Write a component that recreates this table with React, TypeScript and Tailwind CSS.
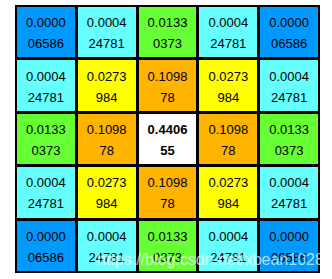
const BLUE = "bg-[#0099ff]";
const CYAN = "bg-[#66ffff]";
const GREEN = "bg-[#66ff33]";
const YELLOW = "bg-[#ffff00]";
const ORANGE = "bg-[#ffb400]";
const WHITE = "bg-white";

type Cell = { a: string; b: string; bg: string; bold?: boolean };

const far: Cell = { a: "0.0000", b: "06586", bg: BLUE };
const edge: Cell = { a: "0.0004", b: "24781", bg: CYAN };
const axis: Cell = { a: "0.0133", b: "0373", bg: GREEN };
const diag: Cell = { a: "0.0273", b: "984", bg: YELLOW };
const near: Cell = { a: "0.1098", b: "78", bg: ORANGE };
const mid: Cell = { a: "0.4406", b: "55", bg: WHITE, bold: true };

const ROWS: Cell[][] = [
  [far, edge, axis, edge, far],
  [edge, diag, near, diag, edge],
  [axis, near, mid, near, axis],
  [edge, diag, near, diag, edge],
  [far, edge, axis, edge, far],
];

export default function App() {
  return (
    <div className="relative h-[279px] w-[332px] bg-white font-['Liberation_Sans',Arial,sans-serif]">
      <div className="absolute left-[15px] top-[5px] grid h-[268px] w-[305px] grid-cols-5 grid-rows-5 gap-[3px] bg-black p-[2px]">
        {ROWS.flat().map((c, i) => (
          <div
            key={i}
            className={`${c.bg} flex flex-col items-center justify-center pt-[2px] text-[13px] leading-[21px] text-black ${c.bold ? "font-bold" : ""}`}
          >
            <span>{c.a}</span>
            <span>{c.b}</span>
          </div>
        ))}
      </div>
      {/* watermark */}
      <div className="absolute left-[97px] top-[250px] text-[16px] leading-[20px] text-white/70">
        https://blog.csdn.net/xbean1028
      </div>
    </div>
  );
}
